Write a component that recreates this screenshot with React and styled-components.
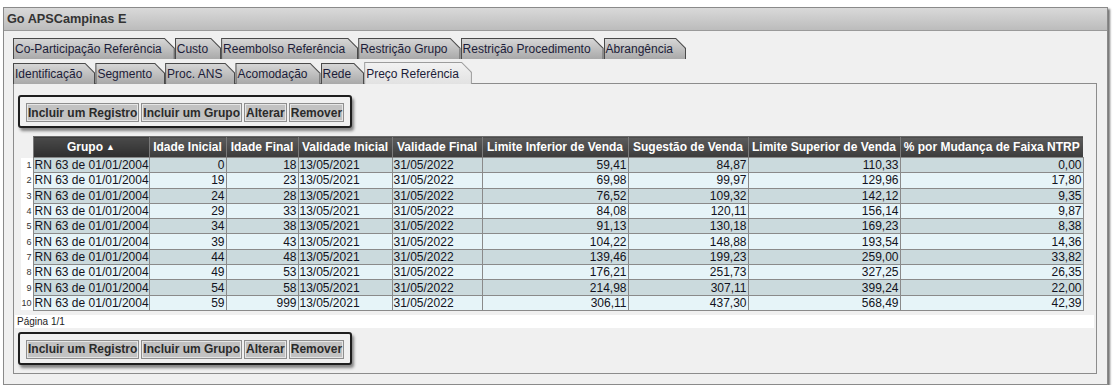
import React from "react";
import styled, { createGlobalStyle } from "styled-components";

const GlobalStyle = createGlobalStyle`
  body {
    margin: 0;
    background: #ffffff;
    font-family: "Liberation Sans", Arial, sans-serif;
  }
`;

const tabsTop = [
  "Co-Participação Referência",
  "Custo",
  "Reembolso Referência",
  "Restrição Grupo",
  "Restrição Procedimento",
  "Abrangência",
];

const tabsBottom = [
  "Identificação",
  "Segmento",
  "Proc. ANS",
  "Acomodação",
  "Rede",
  "Preço Referência",
];

const columns = [
  { key: "num", width: 12 },
  { key: "grupo", title: "Grupo", width: 116, sorted: true },
  { key: "ini", title: "Idade Inicial", width: 77 },
  { key: "fim", title: "Idade Final", width: 72 },
  { key: "vini", title: "Validade Inicial", width: 94 },
  { key: "vfim", title: "Validade Final", width: 90 },
  { key: "linf", title: "Limite Inferior de Venda", width: 146 },
  { key: "sug", title: "Sugestão de Venda", width: 120 },
  { key: "lsup", title: "Limite Superior de Venda", width: 152 },
  { key: "pct", title: "% por Mudança de Faixa NTRP", width: 183 },
];

const rows = [
  [0, 18, "59,41", "84,87", "110,33", "0,00"],
  [19, 23, "69,98", "99,97", "129,96", "17,80"],
  [24, 28, "76,52", "109,32", "142,12", "9,35"],
  [29, 33, "84,08", "120,11", "156,14", "9,87"],
  [34, 38, "91,13", "130,18", "169,23", "8,38"],
  [39, 43, "104,22", "148,88", "193,54", "14,36"],
  [44, 48, "139,46", "199,23", "259,00", "33,82"],
  [49, 53, "176,21", "251,73", "327,25", "26,35"],
  [54, 58, "214,98", "307,11", "399,24", "22,00"],
  [59, 999, "306,11", "437,30", "568,49", "42,39"],
];

export default function App() {
  return (
    <>
      <GlobalStyle />
      <Window>
        <TitleBar>Go APSCampinas E</TitleBar>
        <Body>
          <TabRow>
            {tabsTop.map((t) => (
              <Tab key={t} label={t} />
            ))}
          </TabRow>
          <TabRow $last>
            {tabsBottom.map((t) => (
              <Tab key={t} label={t} active={t === "Preço Referência"} />
            ))}
          </TabRow>
          <Panel>
            <Actions />
            <Grid>
              <colgroup>
                {columns.map((c) => (
                  <col key={c.key} style={{ width: c.width }} />
                ))}
              </colgroup>
              <thead>
                <tr>
                  <NumHead />
                  {columns.slice(1).map((c) => (
                    <HeadCell key={c.key} $sorted={c.sorted}>
                      {c.title}
                      {c.sorted && <SortMark>▲</SortMark>}
                    </HeadCell>
                  ))}
                </tr>
              </thead>
              <tbody>
                {rows.map((r, i) => (
                  <Row key={i} $odd={i % 2 === 0}>
                    <NumCell>{i + 1}</NumCell>
                    <Cell>RN 63 de 01/01/2004</Cell>
                    <Cell $right>{r[0]}</Cell>
                    <Cell $right>{r[1]}</Cell>
                    <Cell>13/05/2021</Cell>
                    <Cell>31/05/2022</Cell>
                    <Cell $right>{r[2]}</Cell>
                    <Cell $right>{r[3]}</Cell>
                    <Cell $right>{r[4]}</Cell>
                    <Cell $right>{r[5]}</Cell>
                  </Row>
                ))}
              </tbody>
            </Grid>
            <Pager>Página 1/1</Pager>
            <Actions />
          </Panel>
        </Body>
      </Window>
    </>
  );
}

const Tab = ({ label, active }) => (
  <TabShell $active={active}>
    <TabFace $active={active}>{label}</TabFace>
  </TabShell>
);

const Actions = () => (
  <Toolbar>
    <Button>Incluir um Registro</Button>
    <Button>Incluir um Grupo</Button>
    <Button>Alterar</Button>
    <Button>Remover</Button>
  </Toolbar>
);

const Window = styled.div`
  width: 1105px;
  margin: 7px 0 0 3px;
  border: 1px solid #8a8a8a;
  box-shadow: 2px 2px 2px rgba(0, 0, 0, 0.55);
  background: #f0f0f0;
  box-sizing: border-box;
`;

const TitleBar = styled.div`
  height: 22px;
  display: flex;
  align-items: center;
  padding-left: 3px;
  background: linear-gradient(#d9d9d9, #bcbcbc);
  border-bottom: 1px solid #9a9a9a;
  font-size: 12.7px;
  font-weight: bold;
  color: #333;
`;

const Body = styled.div`
  padding: 7px 10px 10px 9px;
`;

const TabRow = styled.div`
  display: flex;
  align-items: flex-end;
  margin-bottom: ${(p) => (p.$last ? "-1px" : "3px")};
  position: relative;
  z-index: 1;
`;

const TabShell = styled.div`
  height: ${(p) => (p.$active ? 22 : 21)}px;
  padding: 1px 1px 0 1px;
  box-sizing: border-box;
  background: ${(p) => (p.$active ? "#9c9c9c" : "#4a4a4a")};
  clip-path: polygon(0 0, calc(100% - 10px) 0, 100% 10px, 100% 100%, 0 100%);
`;

const TabFace = styled.div`
  height: 100%;
  display: flex;
  align-items: center;
  padding: 0 12px 0 1px;
  background: ${(p) =>
    p.$active
      ? "linear-gradient(#f2f2f2, #e2e2e2)"
      : "linear-gradient(#d6d6d6, #a9a9a9)"};
  clip-path: polygon(0 0, calc(100% - 9.4px) 0, 100% 9.4px, 100% 100%, 0 100%);
  font-size: 12px;
  color: #1c1c38;
  white-space: nowrap;
`;

const Panel = styled.div`
  display: flex;
  flex-direction: column;
  align-items: flex-start;
  border: 1px solid #8c8c8c;
  background: #f0f0f0;
  padding: 11px 0 8px 0;
`;

const Toolbar = styled.div`
  display: flex;
  gap: 2px;
  margin-left: 4px;
  padding: 6px 6px 4px 6px;
  border: 2px solid #1e1e1e;
  border-radius: 3px;
  background: #f0f0f0;
  box-shadow: 2px 3px 3px rgba(0, 0, 0, 0.45);
`;

const Button = styled.button`
  height: 19px;
  padding: 0 1px;
  border: 1px solid #8e8e8e;
  box-shadow: inset 0 0 0 1px #e6e6e6;
  background: #c2c2c2;
  font-family: "Liberation Sans", Arial, sans-serif;
  font-size: 12px;
  font-weight: bold;
  color: #2a2a2a;
  cursor: pointer;
  &:hover {
    background: #d0d0d0;
  }
`;

const Grid = styled.table`
  width: 1062px;
  margin: 8px 0 0 7px;
  table-layout: fixed;
  border-collapse: collapse;
  font-size: 12px;
`;

const NumHead = styled.th`
  height: 20px;
  padding: 0;
`;

const HeadCell = styled.th`
  height: 20px;
  padding: 0 2px;
  background: ${(p) =>
    p.$sorted
      ? "linear-gradient(#4a4a4a, #2e2e2e)"
      : "linear-gradient(#5c5c5c, #3b3b3b)"};
  border-left: 1px solid #7a7a7a;
  border-top: 1px solid #6a6a6a;
  color: #ffffff;
  font-weight: bold;
  font-size: 12px;
  text-align: center;
  white-space: nowrap;
  overflow: hidden;
`;

const SortMark = styled.span`
  font-size: 9px;
  margin-left: 3px;
  vertical-align: 1px;
`;

const Row = styled.tr`
  background: ${(p) => (p.$odd ? "#cbdadd" : "#e6f4f8")};
`;

const NumCell = styled.td`
  height: 14.3px;
  padding: 0 1px 0 0;
  background: #ffffff;
  font-size: 9px;
  text-align: right;
  color: #333;
`;

const Cell = styled.td`
  height: 14.3px;
  padding: 0 1px;
  line-height: 14px;
  border: 1px solid #8a8a8a;
  color: #121220;
  text-align: ${(p) => (p.$right ? "right" : "left")};
  white-space: nowrap;
  overflow: hidden;
`;

const Pager = styled.div`
  align-self: stretch;
  height: 13px;
  margin: 4px 2px 4px 1px;
  padding-left: 2px;
  background: #ffffff;
  font-size: 10px;
  line-height: 13px;
  color: #222;
`;
